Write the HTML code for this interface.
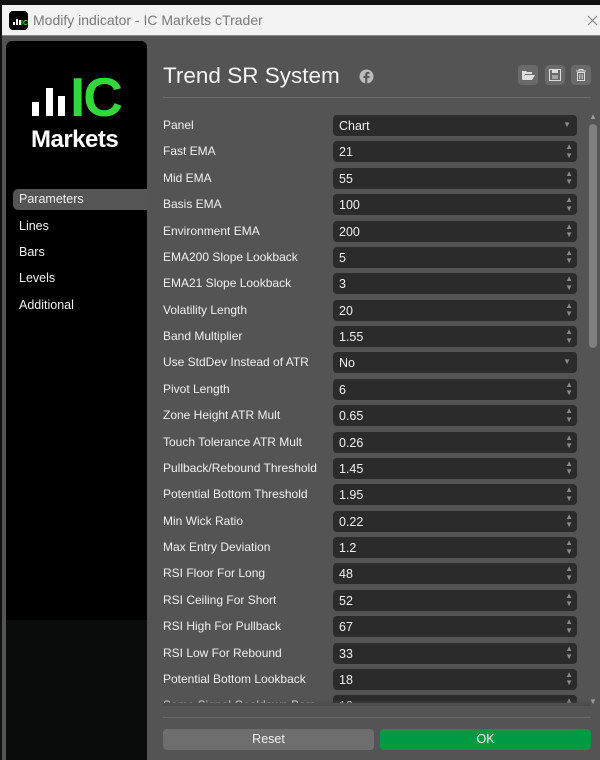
<!DOCTYPE html>
<html><head><style>
*{margin:0;padding:0;box-sizing:border-box}
body{width:600px;height:760px;background:#111;position:relative;overflow:hidden;font-family:"Liberation Sans",sans-serif}
.win{position:absolute;left:2px;top:5px;width:598px;height:755px;background:#545454}
.tb{position:absolute;left:0;top:0;width:598px;height:31px;background:#f3f3f3;border-bottom:1px solid #888}
.tb .ic{position:absolute;left:7px;top:6px;width:19px;height:19px;background:#000;border-radius:4px}
.tb .t{position:absolute;left:31px;top:7px;font-size:14px;color:#7a7a7a}
.side{position:absolute;left:6px;top:41px;width:141px;height:719px;background:#000;border-radius:6px 6px 0 0}
.side .low{position:absolute;left:0;top:579px;width:141px;height:140px;background:#0a0b0b}
.nav{position:absolute;left:13px;font-size:12.5px;color:#f0f0f0}
.sel{position:absolute;left:13px;top:189px;width:134px;height:21px;background:#555;border-radius:5px 0 0 5px}
.lbl{position:absolute;left:163px;font-size:12px;color:#f0f0f0}
.inp{position:absolute;left:333px;width:244px;height:21px;background:#2b2b2b;border-radius:4px;font-size:12.5px;color:#f0f0f0;padding:4px 0 0 6px}
.sp{position:absolute;right:4px;top:2px;font-size:8px;color:#8a8a8a;line-height:8.5px}
.dd{position:absolute;right:6px;top:5px;font-size:8px;color:#8a8a8a}
.btn{position:absolute;top:729px;height:21px;border-radius:4px;font-size:12.5px;color:#f0f0f0;text-align:center;line-height:21px}
.ib{position:absolute;top:65px;width:20px;height:20px;background:#6a6a6a;border-radius:4px}
</style></head><body>
<div class="win"></div>
<div class="tb" style="left:2px;top:5px">
<div class="ic"><svg width="19" height="19"><rect x="4" y="11" width="2" height="3" fill="#fff"/><rect x="7" y="8" width="2" height="6" fill="#fff"/><rect x="10" y="9" width="2" height="5" fill="#fff"/><text x="12" y="14" font-size="7" font-weight="bold" fill="#35d63a" font-family="Liberation Sans">IC</text></svg></div>
<div class="t">Modify indicator - IC Markets cTrader</div>
<svg style="position:absolute;left:585px;top:10px" width="11" height="11"><path d="M1 1L10 10M10 1L1 10" stroke="#888" stroke-width="1.2"/></svg>
</div>
<div class="side"><div class="low"></div>
<svg style="position:absolute;left:0;top:0" width="141" height="120">
<rect x="26" y="61" width="7" height="14" fill="#fff"/><rect x="40" y="47" width="7" height="28" fill="#fff"/><rect x="52" y="55" width="7" height="20" fill="#fff"/>
<text x="64" y="75" font-size="55" font-weight="bold" fill="#35d63a" font-family="Liberation Sans" letter-spacing="-2">IC</text>
<text x="25" y="106" font-size="24" font-weight="bold" fill="#fff" font-family="Liberation Sans" letter-spacing="-0.5">Markets</text>
</svg></div>
<div class="sel"></div>
<div class="nav" style="top:192px;left:19px">Parameters</div>
<div class="nav" style="top:219px;left:19px">Lines</div>
<div class="nav" style="top:245px;left:19px">Bars</div>
<div class="nav" style="top:271px;left:19px">Levels</div>
<div class="nav" style="top:298px;left:19px">Additional</div>
<div style="position:absolute;left:163px;top:63px;font-size:22.5px;color:#f4f4f4">Trend SR System</div>
<svg style="position:absolute;left:359px;top:69px" width="15" height="15"><circle cx="7.5" cy="7.5" r="7" fill="#bbb"/><path d="M8.3 15V9h2l.3-2H8.3V5.8c0-.6.2-1 1-1h1.2V3.1c-.3 0-1-.1-1.7-.1-1.6 0-2.6 1-2.6 2.7V7H4.5v2h1.7v6z" fill="#545454"/></svg>
<div class="ib" style="left:518px"><svg width="20" height="20"><path d="M4 6h4l1 1h5v2H7l-2 5H4z M7 10h10l-3 5H4z" fill="#ddd"/></svg></div>
<div class="ib" style="left:545px"><svg width="20" height="20"><rect x="4.5" y="4.5" width="11" height="11" fill="none" stroke="#ddd"/><rect x="7" y="5" width="6" height="3" fill="#ddd"/><path d="M7 11h6M7 13h6" stroke="#ddd"/></svg></div>
<div class="ib" style="left:571px"><svg width="20" height="20"><path d="M5 6h10M8 6V4.5h4V6" stroke="#ddd" fill="none"/><rect x="6.5" y="7.5" width="7" height="8" fill="none" stroke="#ddd"/><path d="M8.8 9v5M11.2 9v5" stroke="#ddd"/></svg></div>
<div style="position:absolute;left:163px;top:97px;width:428px;height:1px;background:#6c6c6c"></div>
<div style="position:absolute;left:0;top:0;width:600px;height:703px;overflow:hidden" id="c">
</div>
<div style="position:absolute;left:589px;top:124px;width:8px;height:224px;background:#808080;border-radius:4px"></div>
<div style="position:absolute;left:589px;top:112px;font-size:8px;color:#999">▲</div>
<div style="position:absolute;left:589px;top:697px;font-size:8px;color:#999">▼</div>
<div style="position:absolute;left:163px;top:700px;width:428px;height:6px;background:linear-gradient(#5a5a5a00,#4a4a4a)"></div>
<div style="position:absolute;left:163px;top:717px;width:428px;height:1px;background:#6c6c6c"></div>
<div class="btn" style="left:163px;width:211px;background:#6e6e6e">Reset</div>
<div class="btn" style="left:380px;width:211px;background:#009a44">OK</div>
<script>
var r=[["Panel","Chart",1],["Fast EMA","21"],["Mid EMA","55"],["Basis EMA","100"],["Environment EMA","200"],["EMA200 Slope Lookback","5"],["EMA21 Slope Lookback","3"],["Volatility Length","20"],["Band Multiplier","1.55"],["Use StdDev Instead of ATR","No",1],["Pivot Length","6"],["Zone Height ATR Mult","0.65"],["Touch Tolerance ATR Mult","0.26"],["Pullback/Rebound Threshold","1.45"],["Potential Bottom Threshold","1.95"],["Min Wick Ratio","0.22"],["Max Entry Deviation","1.2"],["RSI Floor For Long","48"],["RSI Ceiling For Short","52"],["RSI High For Pullback","67"],["RSI Low For Rebound","33"],["Potential Bottom Lookback","18"],["Same Signal Cooldown Bars","10"]];
var h="";r.forEach(function(x,i){var y=124+i*26.38;h+='<div class="lbl" style="top:'+(y-6)+'px">'+x[0]+'</div><div class="inp" style="top:'+(y-9)+'px">'+x[1]+(x[2]?'<span class="dd">▼</span>':'<span class="sp">▲<br>▼</span>')+'</div>';});
document.getElementById("c").innerHTML=h;
</script>
</body></html>
